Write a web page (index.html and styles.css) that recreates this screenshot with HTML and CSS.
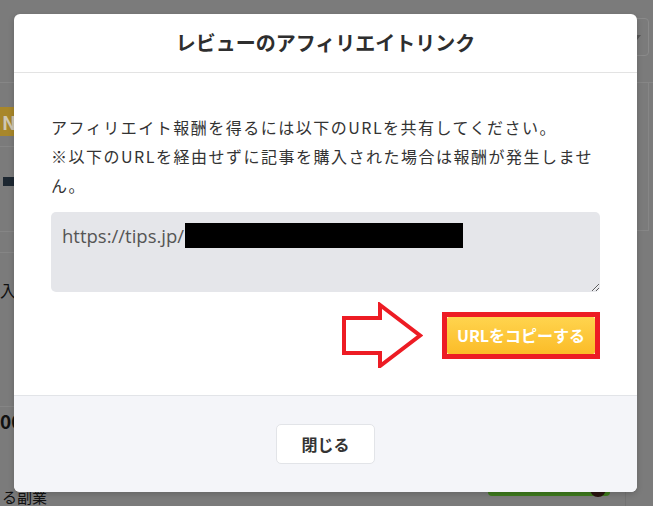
FILE: index.html
```html
<!DOCTYPE html>
<html lang="ja">
<head>
<meta charset="utf-8">
<title>レビューのアフィリエイトリンク</title>
<link rel="stylesheet" href="styles.css">
</head>
<body>
<div class="page">
  <header class="page-header">
    <div class="bg-select"><span class="bg-caret"></span></div>
  </header>
  <div class="page-main">
    <div class="page-left">
      <div class="bg-badge">NEW</div>
      <div class="bg-rule r1"></div>
      <div class="bg-darkbar"></div>
      <div class="bg-rule r2"></div>
      <div class="bg-rule r3"></div>
      <div class="bg-text t1">入て</div>
      <div class="bg-rule r4"></div>
      <div class="bg-text t2">000円</div>
      <div class="bg-last">
        <div class="bg-text t3">る副業</div>
        <div class="bg-green"><span class="bg-avatar"></span></div>
      </div>
    </div>
    <aside class="page-side">
      <div class="side-panel"></div>
      <div class="side-rest"></div>
    </aside>
  </div>
</div>

<div class="modal">
  <div class="modal-header">
    <h2 class="modal-title">レビューのアフィリエイトリンク</h2>
  </div>
  <div class="modal-body">
    <p class="notice">アフィリエイト報酬を得るには以下のURLを共有してください。<br>※以下のURLを経由せずに記事を購入された場合は報酬が発生しません。</p>
    <div class="url-box"><span class="url-text">https://tips.jp/</span><span class="redact"></span></div>
    <div class="copy-row">
      <svg class="arrow" width="81" height="66" viewBox="0 0 81 66">
        <polygon points="2,16 38,16 38,3 78,33.5 38,64 38,51 2,51" fill="#fff" stroke="#ed1c24" stroke-width="4" stroke-linejoin="miter"/>
      </svg>
      <div class="highlight">
        <button class="copy-btn">URLをコピーする</button>
      </div>
    </div>
  </div>
  <div class="modal-footer">
    <button class="close-btn">閉じる</button>
  </div>
</div>
</body>
</html>
```

FILE: styles.css
```css
html, body {
  margin: 0;
  padding: 0;
}
body {
  width: 653px;
  height: 506px;
  overflow: hidden;
  position: relative;
  background: #7b7b7b;
  font-family: "Noto Sans CJK JP", "Noto Sans", sans-serif;
  color: #333;
}

/* ---------- dimmed background page ---------- */
.page {
  height: 506px;
}
.page-header {
  height: 83px;
  box-sizing: border-box;
  border-bottom: 1px solid #868686;
  display: flex;
  justify-content: flex-end;
  align-items: flex-start;
  padding: 18px 4px 0 0;
}
.bg-select {
  width: 110px;
  height: 38px;
  box-sizing: border-box;
  border: 1px solid #8a8a8a;
  border-radius: 4px;
  display: flex;
  justify-content: flex-end;
  align-items: center;
  padding-right: 7px;
}
.bg-caret {
  width: 0;
  height: 0;
  border-left: 4px solid transparent;
  border-right: 4px solid transparent;
  border-top: 5px solid #555;
}
.page-main {
  display: flex;
}
.page-left {
  flex: 0 0 625px;
  display: flex;
  flex-direction: column;
}
.bg-badge {
  margin-top: 24px;
  width: 60px;
  height: 29px;
  background: #a8872a;
  color: #cfc7b3;
  font-weight: 700;
  font-size: 19px;
  line-height: 29px;
  padding-left: 2px;
  box-sizing: border-box;
}
.bg-rule {
  height: 1px;
  background: #858585;
}
.r1 { margin-top: 10px; }
.r2 { margin-top: 45px; }
.r3 { margin-top: 20px; }
.r4 { margin-top: 106px; }
.bg-darkbar {
  margin: 30px 0 0 3px;
  width: 80px;
  height: 9px;
  background: #1d2731;
}
.bg-text {
  color: #111;
  font-size: 16px;
  line-height: 20px;
  white-space: nowrap;
}
.t1 {
  margin: 27px 0 0 0;
}
.t2 {
  margin: 2px 0 0 0;
  font-weight: 700;
  font-size: 19px;
  line-height: 24px;
}
.bg-last {
  margin-top: 47px;
  display: flex;
  align-items: flex-start;
}
.t3 {
  margin: 9px 0 0 2px;
  font-size: 15px;
  line-height: 15px;
}
.bg-green {
  margin-left: auto;
  margin-right: 15px;
  width: 122px;
  height: 16px;
  background: #3e7b1d;
  border-radius: 0 0 4px 4px;
  display: flex;
  justify-content: flex-end;
}
.bg-avatar {
  width: 16px;
  height: 16px;
  border-radius: 50%;
  background: #2a1410;
  margin: 1px 4px 0 0;
}
.page-side {
  flex: 1;
  display: flex;
  flex-direction: column;
}
.side-panel {
  height: 148px;
  margin-right: 4px;
  border: 1px solid #868686;
  border-top: none;
  box-sizing: border-box;
}
.side-rest {
  margin-top: 21px;
  height: 260px;
  border-left: 1px solid #727272;
}

/* ---------- modal (overlay) ---------- */
.modal {
  position: absolute;
  left: 14px;
  top: 14px;
  width: 623px;
  background: #fff;
  border-radius: 6px;
  overflow: hidden;
  box-shadow: 0 2px 6px rgba(0, 0, 0, 0.18);
}
.modal-header {
  height: 59px;
  box-sizing: border-box;
  border-bottom: 1px solid #e3e3e3;
  display: flex;
  align-items: center;
  justify-content: center;
}
.modal-title {
  margin: 0;
  font-size: 20px;
  font-weight: 700;
  color: #2e2e2e;
  line-height: 28px;
}
.modal-body {
  padding: 40px 37px 27px;
}
.notice {
  margin: 0;
  font-size: 16px;
  line-height: 29px;
  letter-spacing: 1.5px;
  color: #333;
}
.url-box {
  margin-top: 12px;
  height: 80px;
  box-sizing: border-box;
  padding: 11px 11px;
  background: #e5e6ea;
  border-radius: 5px;
  display: flex;
  align-items: flex-start;
  resize: both;
  overflow: auto;
}
.url-text {
  font-family: "Open Sans", "Liberation Sans", sans-serif;
  font-size: 18.5px;
  line-height: 25px;
  color: #555;
}
.redact {
  width: 278px;
  height: 25px;
  background: #000;
  margin-left: 1px;
}
.copy-row {
  margin-top: 10px;
  display: flex;
  justify-content: flex-end;
  align-items: center;
  gap: 19px;
}
.arrow {
  display: block;
}
.highlight {
  border: 5px solid #ed1c24;
  display: flex;
}
.copy-btn {
  width: 148px;
  height: 37px;
  border: none;
  border-radius: 2px;
  background: linear-gradient(#ffd44e, #fbbc28);
  color: #fff;
  font-family: "Noto Sans CJK JP", sans-serif;
  font-weight: 700;
  font-size: 16px;
  padding: 0;
}
.modal-footer {
  background: #f4f5f9;
  border-top: 1px solid #e2e4e8;
  padding: 28px 0;
  display: flex;
  justify-content: center;
}
.close-btn {
  width: 99px;
  height: 40px;
  background: #fff;
  border: 1px solid #e2e4e8;
  border-radius: 5px;
  font-family: "Noto Sans CJK JP", sans-serif;
  font-weight: 700;
  font-size: 16px;
  color: #333;
  padding: 0;
}
```
